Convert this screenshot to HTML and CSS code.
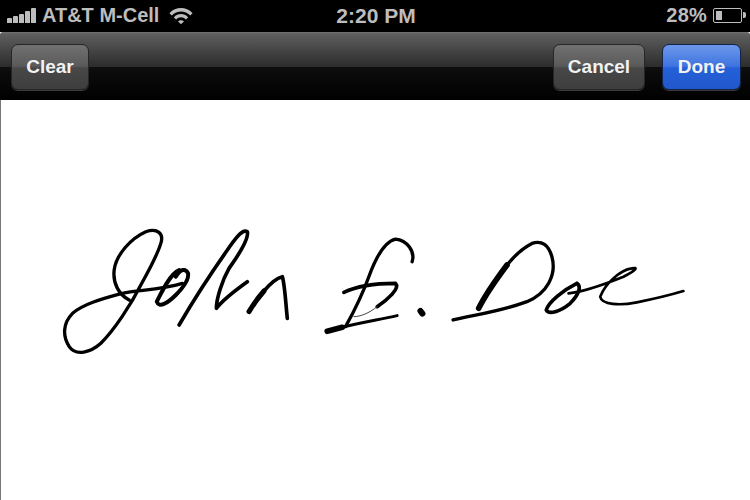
FILE: index.html
```html
<!DOCTYPE html>
<html lang="en">
<head>
<meta charset="utf-8">
<title>Signature</title>
<link rel="stylesheet" href="styles.css">
</head>
<body>
<div class="phone">
  <header class="status">
    <div class="status-left">
      <div class="signal"><i class="b1"></i><i class="b2"></i><i class="b3"></i><i class="b4"></i><i class="b5"></i></div>
      <span class="carrier">AT&amp;T M-Cell</span>
      <svg class="wifi" viewBox="0 0 24 17" width="24" height="17">
        <path d="M.4 6.2C6.8 -.6 17.2 -.6 23.6 6.2L21.2 8.6C16 3.2 8 3.2 2.8 8.6Z" fill="#bdbdbd"/>
        <path d="M4.8 10.4C8.8 6 15.2 6 19.2 10.4L16.9 12.6C14 9.6 10 9.6 7.1 12.6Z" fill="#bdbdbd"/>
        <path d="M9 14.4C10.6 12.8 13.4 12.8 15 14.4L12 17.2Z" fill="#bdbdbd"/>
      </svg>
    </div>
    <div class="time">2:20 PM</div>
    <div class="status-right">
      <span class="percent">28%</span>
      <div class="battery"><div class="charge"></div></div>
    </div>
  </header>
  <nav class="toolbar">
    <button class="btn">Clear</button>
    <div class="spacer"></div>
    <button class="btn btn-cancel">Cancel</button>
    <button class="btn btn-done">Done</button>
  </nav>
  <main class="canvas">
    <svg class="signature" viewBox="0 100 750 400" width="749" height="400">
      <g fill="none" stroke="#000" stroke-linecap="round" stroke-linejoin="round">
        <g transform="translate(50 215) scale(.33333)">
          <path stroke-width="10" d="M235 255C205 240 185 205 190 165C195 120 240 70 285 50C320 38 340 55 330 85C320 120 295 165 270 210C240 270 190 345 150 385C120 412 75 425 55 395C35 365 35 325 65 295C100 265 160 250 215 235C260 225 330 225 395 205"/>
          <path stroke-width="12" d="M385 165C360 175 335 225 318 260C325 280 350 265 375 240C395 220 415 195 412 175C405 160 390 160 375 185"/>
          <path stroke-width="11" d="M385 330C420 270 470 190 530 105C550 75 575 40 590 50C595 70 560 125 535 160C515 195 497 250 497 280C520 250 555 225 590 200"/>
          <path stroke-width="15" d="M595 290C610 265 625 245 640 228"/>
          <path stroke-width="11" d="M640 228C655 210 675 190 695 185C702 205 705 260 710 310"/>
        </g>
        <g transform="translate(300 215) scale(.33333)">
          <path stroke-width="10" d="M335 140C345 110 320 75 285 72C250 80 225 130 205 185C185 240 160 290 135 335"/>
          <path stroke-width="11" d="M130 232C165 215 225 205 285 205C300 220 260 255 230 275"/>
          <path stroke-width="3" stroke="#444" d="M230 275C205 295 180 305 160 305"/>
          <path stroke-width="9" d="M110 340C170 325 230 315 290 302"/>
          <path stroke-width="17" d="M80 349L125 337"/>
          <path stroke-width="18" d="M360 288L366 296"/>
          <path stroke-width="10" d="M458 315C520 300 600 290 680 260C740 235 770 180 755 125C745 90 725 75 695 85C665 100 640 125 620 150"/>
          <path stroke-width="17" d="M620 150C590 190 555 240 535 280"/>
          <path stroke-width="11" d="M830 205C790 225 745 260 738 285C745 300 780 290 810 265C835 240 845 215 830 205"/>
          <path stroke-width="8" d="M805 235C850 230 920 205 970 185C1010 165 1015 155 995 160C960 165 915 205 900 245C905 270 960 272 1010 262C1060 252 1110 240 1150 228"/>
        </g>
      </g>
    </svg>
  </main>
</div>
</body>
</html>
```
FILE: styles.css
```css
* { box-sizing: border-box; }
html, body { margin: 0; padding: 0; }
body { background: #fff; font-family: "Liberation Sans", Arial, sans-serif; }
.phone { width: 750px; height: 500px; display: flex; flex-direction: column; overflow: hidden; }
.status {
  height: 32px; background: #000; color: #bdbdbd;
  display: grid; grid-template-columns: 1fr auto 1fr; align-items: center;
  padding: 0 5px 1px 7px; font-size: 20px; font-weight: 700;
}
.status-left { display: flex; align-items: center; }
.signal { display: flex; align-items: flex-end; gap: 1px; height: 15px; width: 30px; }
.signal i { display: block; width: 5px; background: #bdbdbd; border-radius: 1px 1px 0 0; }
.b1 { height: 5px; } .b2 { height: 7px; } .b3 { height: 9px; } .b4 { height: 12px; } .b5 { height: 15px; }
.carrier { margin-left: 5px; }
.wifi { margin-left: 10px; }
.time { text-align: center; font-size: 21px; }
.status-right { display: flex; align-items: center; justify-content: flex-end; }
.percent { letter-spacing: .2px; }
.battery {
  position: relative; width: 29px; height: 15px; margin-left: 6px; margin-right: 3px;
  border: 1.5px solid #bdbdbd; border-radius: 2px; padding: 2px;
}
.battery::after {
  content: ""; position: absolute; right: -5px; top: 3px; width: 3px; height: 6px;
  background: #bdbdbd; border-radius: 0 2px 2px 0;
}
.charge { width: 6px; height: 100%; background: #bdbdbd; }
.toolbar {
  height: 68px; display: flex; align-items: center; gap: 17px; padding: 1px 9px 0 11px;
  border-radius: 3px 3px 0 0;
  background: linear-gradient(#747474 0, #5e5e5e 2px, #2c2c2c 51%, #0e0e0e 51%, #000 100%);
}
.spacer { flex: 1; }
.btn {
  width: 78px; height: 46px; border-radius: 7px; padding: 0;
  border: 1px solid #262626;
  background: linear-gradient(#717171 0, #5a5a5a 48%, #484848 52%, #3e3e3e 100%);
  box-shadow: 0 1px 0 rgba(255,255,255,.22);
  color: #f2f2f2; font: 700 19px "Liberation Sans", Arial, sans-serif;
}
.btn-cancel { width: 92px; }
.btn-done {
  width: 79px; border-color: #12244a;
  background: linear-gradient(#6d97ea 0, #3f74e0 48%, #2460d8 52%, #2257cc 100%);
}
.canvas { flex: 1; background: #fff; border-left: 1px solid #777; }
.signature { display: block; filter: blur(.35px); }
```
